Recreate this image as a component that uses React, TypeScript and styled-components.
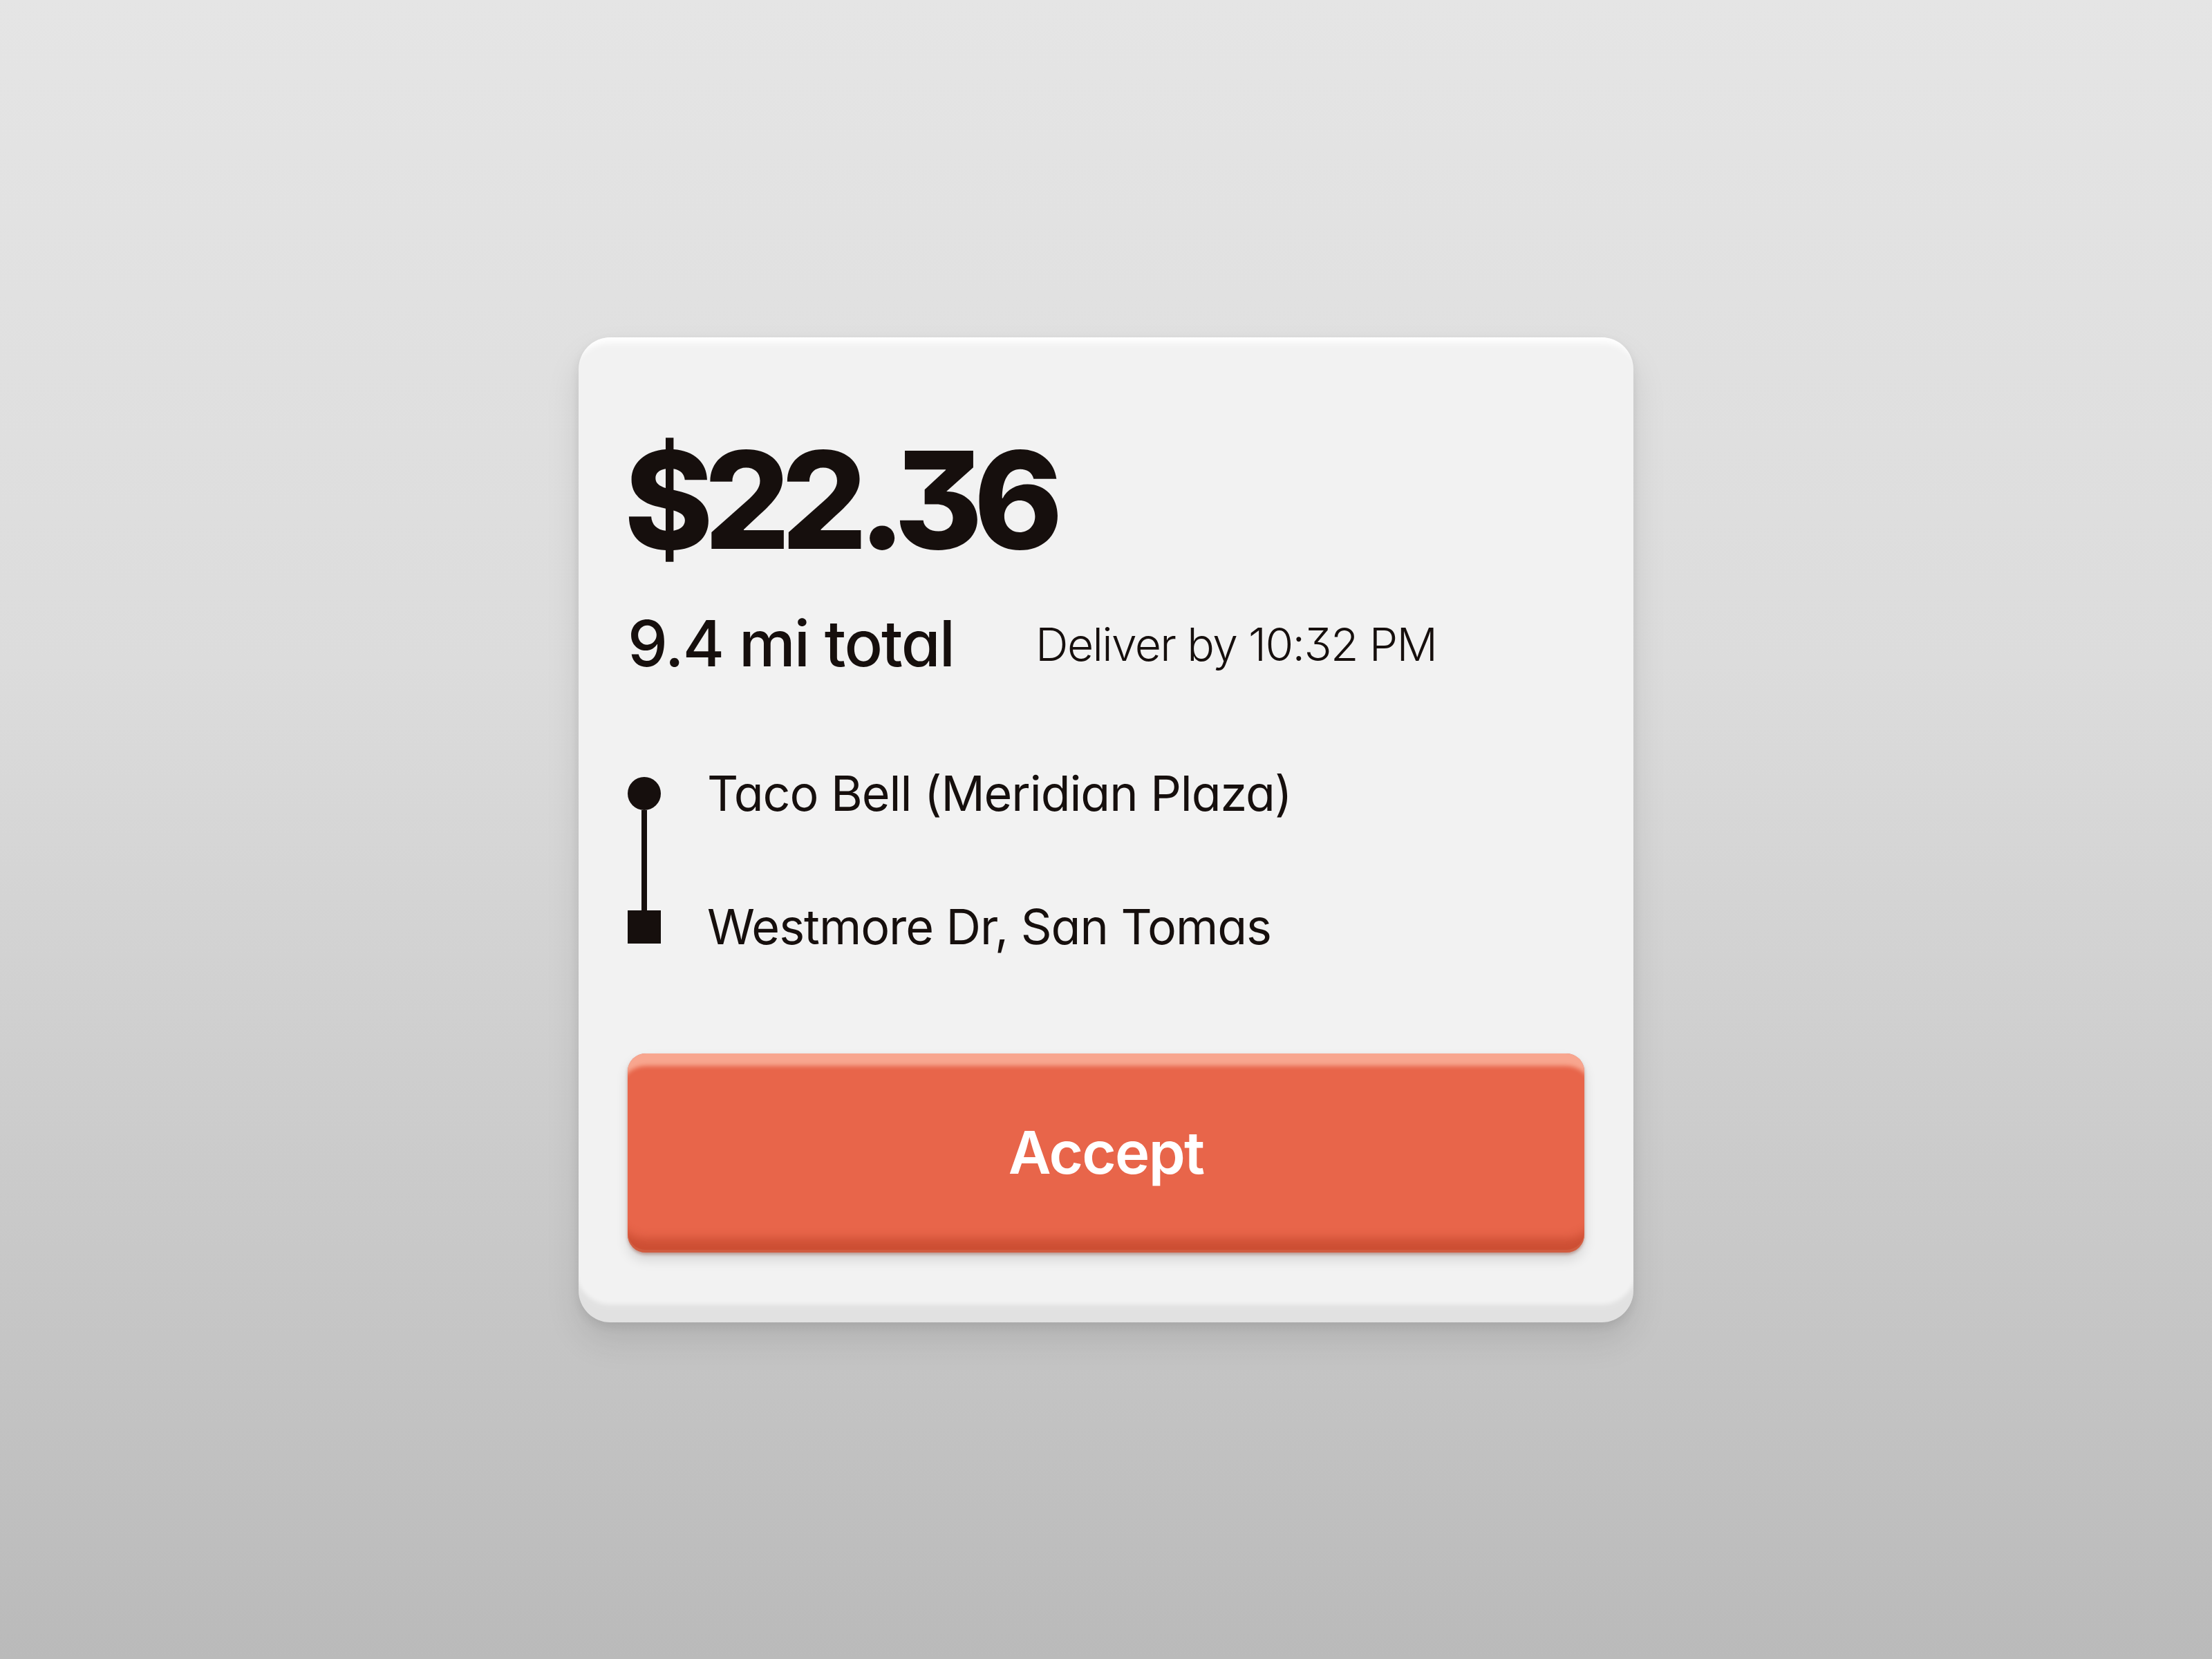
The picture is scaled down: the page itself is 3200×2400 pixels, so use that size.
import React from "react";
import styled, { createGlobalStyle } from "styled-components";

const GlobalStyle = createGlobalStyle`
  html, body {
    margin: 0;
    padding: 0;
  }
  body {
    font-family: "Inter", "Noto Sans", sans-serif;
    font-feature-settings: "cv09" 1, "cv11" 1;
    color: #160f0d;
  }
`;

const Page = styled.div`
  width: 3200px;
  height: 2400px;
  display: flex;
  align-items: center;
  justify-content: center;
  background: linear-gradient(180deg, #e5e5e5 0%, #dcdcdc 40%, #bababa 100%);
`;

const OfferCard = styled.div`
  box-sizing: border-box;
  width: 1526px;
  height: 1425px;
  padding: 135px 71px 0 71px;
  border-radius: 46px;
  background: #f2f2f2;
  display: flex;
  flex-direction: column;
  box-shadow:
    inset 0 22px 10px -14px rgba(255, 255, 255, 0.95),
    inset 0 -30px 6px -4px rgba(0, 0, 0, 0.065),
    0 26px 50px rgba(0, 0, 0, 0.1),
    0 6px 14px rgba(0, 0, 0, 0.08);
`;

const Price = styled.div`
  font-size: 195px;
  line-height: 200px;
  font-weight: 800;
  letter-spacing: -0.066em;
  margin-left: -5px;
`;

const StatsRow = styled.div`
  display: flex;
  align-items: center;
  gap: 118px;
  margin-top: 62px;
  height: 92px;
`;

const Distance = styled.span`
  font-size: 92px;
  line-height: 92px;
  font-weight: 500;
  letter-spacing: -0.02em;
`;

const Deadline = styled.span`
  font-size: 66px;
  line-height: 66px;
  font-weight: 300;
  letter-spacing: -0.025em;
  margin-top: 2px;
`;

const Route = styled.div`
  display: flex;
  flex-direction: column;
  margin-top: 147px;
`;

const Stop = styled.div`
  display: flex;
  align-items: center;
  gap: 67px;
  height: 48px;
`;

const Marker = styled.span<{ $shape: "dot" | "square" }>`
  flex: none;
  width: 48px;
  height: 48px;
  background: #160f0d;
  border-radius: ${(p) => (p.$shape === "dot" ? "50%" : "0")};
`;

const Connector = styled.span`
  width: 8px;
  height: 145px;
  margin-left: 20px;
  background: #160f0d;
`;

const StopName = styled.span`
  font-size: 70px;
  line-height: 48px;
  font-weight: 400;
  letter-spacing: -0.015em;
`;

const AcceptButton = styled.button`
  box-sizing: border-box;
  margin-top: 159px;
  width: 100%;
  height: 288px;
  border: none;
  border-radius: 26px;
  background: #e8654a;
  color: #ffffff;
  font-family: "Inter", "Noto Sans", sans-serif;
  font-feature-settings: "cv09" 1, "cv11" 1;
  font-size: 85px;
  font-weight: 600;
  letter-spacing: -0.02em;
  cursor: pointer;
  box-shadow:
    inset 0 30px 6px -12px rgba(250, 178, 155, 0.85),
    inset 0 -40px 14px -20px rgba(170, 50, 25, 0.45),
    inset 0 -4px 0 0 rgba(240, 130, 100, 0.9),
    0 10px 18px rgba(0, 0, 0, 0.12),
    0 3px 4px rgba(140, 50, 30, 0.35);
`;

export default function App() {
  return (
    <>
      <GlobalStyle />
      <Page>
        <OfferCard>
          <Price>$22.36</Price>
          <StatsRow>
            <Distance>9.4 mi total</Distance>
            <Deadline>Deliver by 10:32 PM</Deadline>
          </StatsRow>
          <Route>
            <Stop>
              <Marker $shape="dot" />
              <StopName>Taco Bell (Meridian Plaza)</StopName>
            </Stop>
            <Connector />
            <Stop>
              <Marker $shape="square" />
              <StopName>Westmore Dr, San Tomas</StopName>
            </Stop>
          </Route>
          <AcceptButton>Accept</AcceptButton>
        </OfferCard>
      </Page>
    </>
  );
}
